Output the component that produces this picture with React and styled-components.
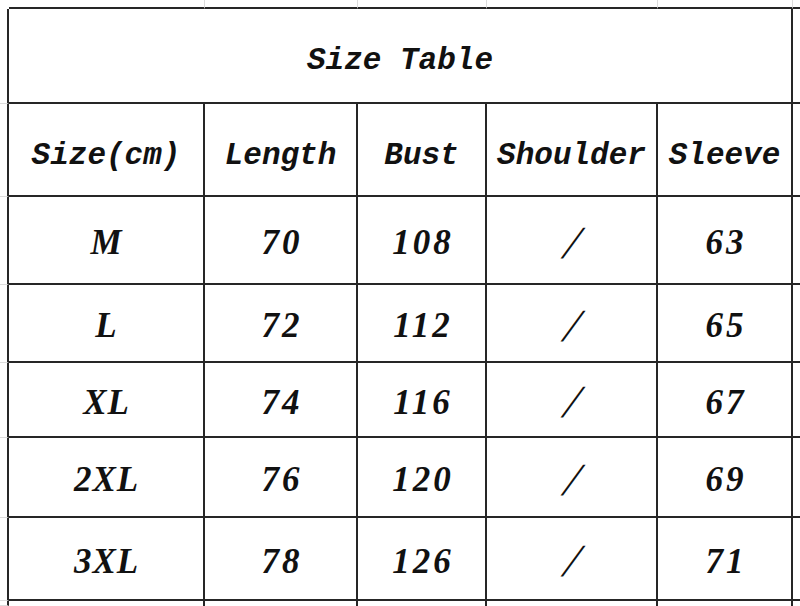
import React from 'react';
import styled, { createGlobalStyle } from 'styled-components';

const GlobalStyle = createGlobalStyle`
  html, body {
    margin: 0;
    padding: 0;
    background: #ffffff;
    overflow: hidden;
  }
`;

const LINE = '#262626';
const FAINT = '#dcdcdc';

const columns = ['Size(cm)', 'Length', 'Bust', 'Shoulder', 'Sleeve'];

const rows = [
  ['M', '70', '108', '/', '63'],
  ['L', '72', '112', '/', '65'],
  ['XL', '74', '116', '/', '67'],
  ['2XL', '76', '120', '/', '69'],
  ['3XL', '78', '126', '/', '71'],
];

const Sheet = styled.div`
  display: grid;
  grid-template-columns: 9px 196px 153px 129px 171px 135px 1fr;
  grid-template-rows: 9px 95px 93px 88px 78px 75px 80px 83px 1fr;
  width: 800px;
  height: 606px;
  background: #fff;
  color: #111;
`;

const Corner = styled.div`
  box-sizing: border-box;
`;

const TopEdge = styled.div`
  box-sizing: border-box;
  border-bottom: 2px solid ${LINE};
  border-right: ${(p) => (p.$last ? 'none' : `1px solid ${FAINT}`)};
`;

const LeftEdge = styled.div`
  box-sizing: border-box;
  border-right: 2px solid ${LINE};
  border-bottom: 1px solid ${FAINT};
`;

const Tail = styled.div`
  box-sizing: border-box;
  border-bottom: ${(p) => (p.$bottom ? 'none' : `2px solid ${LINE}`)};
`;

const Cell = styled.div`
  box-sizing: border-box;
  display: flex;
  align-items: center;
  justify-content: center;
  border-right: 2px solid ${LINE};
  border-bottom: ${(p) => (p.$stub ? 'none' : `2px solid ${LINE}`)};
  grid-column: ${(p) => p.$span || 'auto'};
  white-space: nowrap;
`;

const Title = styled(Cell)`
  font-family: "Liberation Mono", "DejaVu Sans Mono", monospace;
  font-weight: bold;
  font-style: italic;
  font-size: 31px;
  padding-top: 10px;
`;

const HeadText = styled.span`
  font-family: "Liberation Mono", "DejaVu Sans Mono", monospace;
  font-weight: bold;
  font-style: italic;
  font-size: 31px;
  margin-top: 11px;
`;

const ValueText = styled.span`
  font-family: "Liberation Serif", "Times New Roman", serif;
  font-weight: bold;
  font-style: italic;
  font-size: 35px;
  letter-spacing: ${(p) => (p.$digits ? '3px' : '1px')};
  padding-left: ${(p) => (p.$digits ? '3px' : '1px')};
  margin-top: 6px;
`;

const SlashText = styled.span`
  font-family: "Liberation Serif", "Times New Roman", serif;
  font-style: italic;
  font-size: 46px;
  transform: skewX(-12deg);
  margin-top: 4px;
  margin-left: 2px;
`;

export default function App() {
  return (
    <>
      <GlobalStyle />
      <Sheet>
        <Corner />
        {columns.map((c) => (
          <TopEdge key={`top-${c}`} />
        ))}
        <TopEdge $last />

        <LeftEdge />
        <Title $span="span 5">Size Table</Title>
        <Tail />

        <LeftEdge />
        {columns.map((c) => (
          <Cell key={c}>
            <HeadText>{c}</HeadText>
          </Cell>
        ))}
        <Tail />

        {rows.map((row) => (
          <React.Fragment key={row[0]}>
            <LeftEdge />
            {row.map((v, i) => (
              <Cell key={i}>
                {v === '/' ? (
                  <SlashText>/</SlashText>
                ) : (
                  <ValueText $digits={i > 0}>{v}</ValueText>
                )}
              </Cell>
            ))}
            <Tail />
          </React.Fragment>
        ))}

        <LeftEdge />
        {columns.map((c) => (
          <Cell key={`stub-${c}`} $stub />
        ))}
        <Tail $bottom />
      </Sheet>
    </>
  );
}
